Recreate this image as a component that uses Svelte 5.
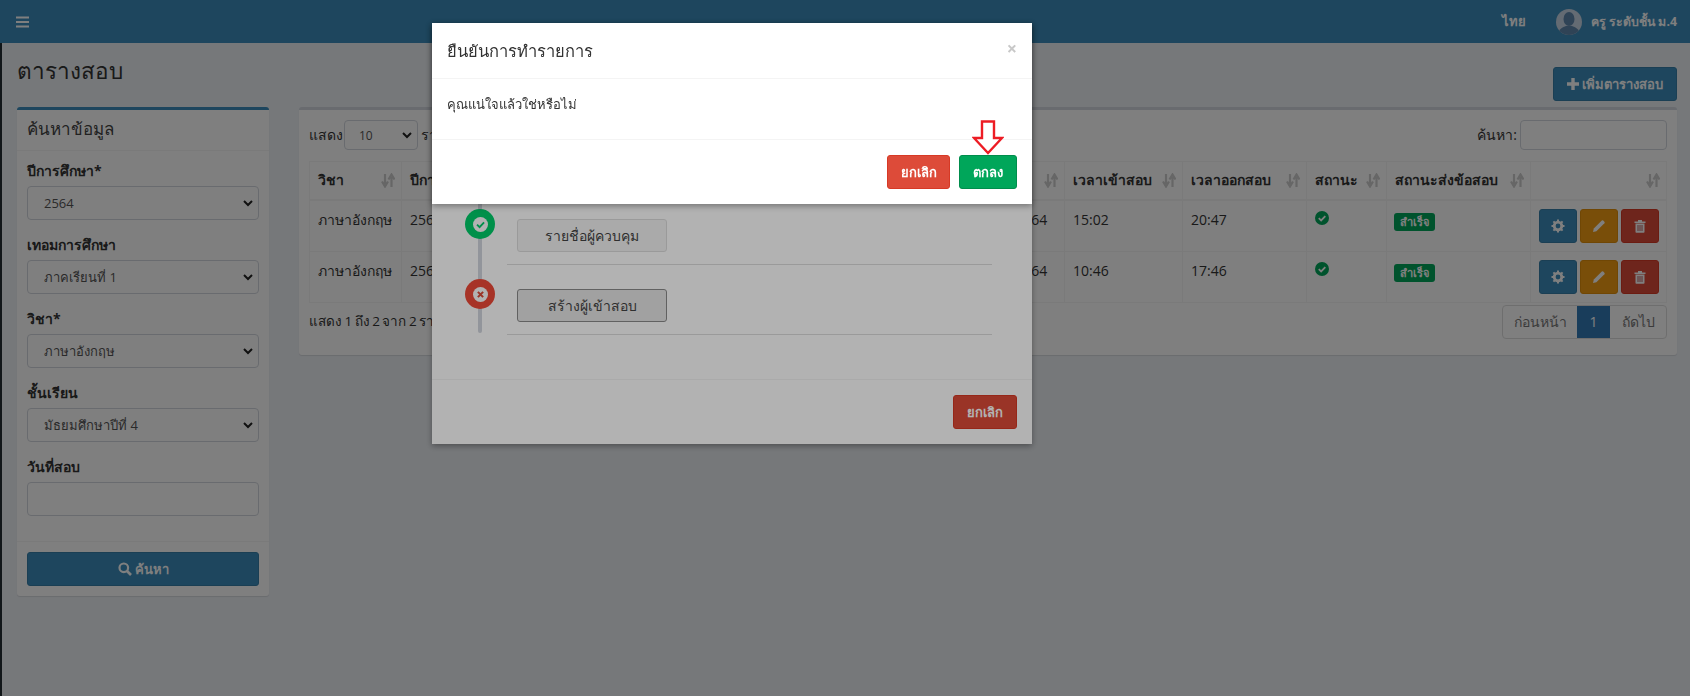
<script>
  const filters = [
    { label: 'ปีการศึกษา*', value: '2564' },
    { label: 'เทอมการศึกษา', value: 'ภาคเรียนที่ 1' },
    { label: 'วิชา*', value: 'ภาษาอังกฤษ' },
    { label: 'ชั้นเรียน', value: 'มัธยมศึกษาปีที่ 4' }
  ];

  const columns = [
    { title: 'วิชา', width: 92 },
    { title: 'ปีการศึกษา', width: 110 },
    { title: 'ภาคเรียน', width: 110 },
    { title: 'ชั้นเรียน', width: 170 },
    { title: 'ห้องสอบ', width: 173 },
    { title: 'วันที่สอบ', width: 100 },
    { title: 'เวลาเข้าสอบ', width: 118 },
    { title: 'เวลาออกสอบ', width: 124 },
    { title: 'สถานะ', width: 80 },
    { title: 'สถานะส่งข้อสอบ', width: 144 },
    { title: '', width: 136 }
  ];

  const rows = [
    { date: '27/09/2564', start: '15:02', end: '20:47' },
    { date: '28/09/2564', start: '10:46', end: '17:46' }
  ];

  const steps = [
    { name: 'ข้อมูลการสอบ', ok: true },
    { name: 'รายชื่อผู้ควบคุม', ok: true },
    { name: 'สร้างผู้เข้าสอบ', ok: false }
  ];
</script>

{#snippet sortIcon()}
  <svg class="sort" viewBox="0 0 14 15" width="14" height="15">
    <path d="M4 1v10M1 8.500 4 13.500 7 8.500" fill="none" stroke="currentColor" stroke-width="2.200" />
    <path d="M10.500 14V4M7.500 6.500 10.500 1.500 13.500 6.500" fill="none" stroke="currentColor" stroke-width="2.200" />
  </svg>
{/snippet}

{#snippet checkCircle(size)}
  <svg viewBox="0 0 16 16" width={size} height={size}>
    <circle cx="8" cy="8" r="8" fill="currentColor" />
    <path d="M4.300 8.200 7 10.800 11.800 5.800" fill="none" stroke="#fff" stroke-width="2" />
  </svg>
{/snippet}

<header class="navbar">
  <svg class="burger" viewBox="0 0 13 12" width="13" height="12">
    <path d="M0 1.500h13M0 6h13M0 10.500h13" stroke="#fff" stroke-width="1.800" />
  </svg>
  <div class="nav-right">
    <span class="lang">ไทย</span>
    <svg class="avatar" viewBox="0 0 26 26" width="26" height="26">
      <clipPath id="avatar-clip"><circle cx="13" cy="13" r="13" /></clipPath>
      <g clip-path="url(#avatar-clip)">
        <rect width="26" height="26" fill="#c9d6e6" />
        <ellipse cx="13" cy="10" rx="5.500" ry="7" fill="#5f87ad" />
        <path d="M2 26c0-6 5-8 8-9h6c3 1 8 3 8 9z" fill="#5f87ad" />
      </g>
    </svg>
    <span class="user">ครู ระดับชั้น ม.4</span>
  </div>
</header>

<main class="content">
  <div class="page-head">
    <h1>ตารางสอบ</h1>
    <button class="btn btn-primary add">
      <svg viewBox="0 0 12 12" width="12" height="12"><path d="M6 0v12M0 6h12" stroke="#fff" stroke-width="3.400" /></svg>
      เพิ่มตารางสอบ
    </button>
  </div>

  <div class="columns">
    <section class="box search-box">
      <h2>ค้นหาข้อมูล</h2>
      <div class="box-body">
        {#each filters as f}
          <div class="field">
            <label for={f.label}>{f.label}</label>
            <select id={f.label} class="control"><option>{f.value}</option></select>
          </div>
        {/each}
        <div class="field">
          <label for="exam-date">วันที่สอบ</label>
          <input id="exam-date" class="control" />
        </div>
      </div>
      <div class="box-footer">
        <button class="btn btn-primary block">
          <svg viewBox="0 0 14 14" width="14" height="14">
            <circle cx="5.800" cy="5.800" r="4.300" fill="none" stroke="#fff" stroke-width="2.200" />
            <path d="M9 9l4 4" stroke="#fff" stroke-width="2.600" />
          </svg>
          ค้นหา
        </button>
      </div>
    </section>

    <section class="box table-box">
      <div class="table-top">
        <div class="length">
          แสดง
          <select class="control small"><option>10</option></select>
          รายการ
        </div>
        <div class="filter">ค้นหา: <input class="control filter-input" /></div>
      </div>

      <table>
        <colgroup>
          {#each columns as c}<col style="width: {c.width}px" />{/each}
        </colgroup>
        <thead>
          <tr>
            {#each columns as c}
              <th><span class="th-inner">{c.title}{@render sortIcon()}</span></th>
            {/each}
          </tr>
        </thead>
        <tbody>
          {#each rows as r}
            <tr>
              <td>ภาษาอังกฤษ</td>
              <td>2564</td>
              <td>1</td>
              <td>มัธยมศึกษาปีที่ 4</td>
              <td>ห้อง 1</td>
              <td>{r.date}</td>
              <td>{r.start}</td>
              <td>{r.end}</td>
              <td class="state">{@render checkCircle(14)}</td>
              <td><span class="badge">สำเร็จ</span></td>
              <td class="action-cell">
                <div class="actions">
                  <button class="btn icon btn-primary" aria-label="ตั้งค่า">
                    <svg viewBox="0 0 14 14" width="14" height="14">
                      <circle cx="7" cy="7" r="3.800" fill="none" stroke="#fff" stroke-width="2.800" />
                      <path d="M7 .5v13M.5 7h13M2.400 2.400l9.200 9.200M11.600 2.400l-9.200 9.200" stroke="#fff" stroke-width="2" stroke-dasharray="2.300 8.400" />
                    </svg>
                  </button>
                  <button class="btn icon btn-warning" aria-label="แก้ไข">
                    <svg viewBox="0 0 14 14" width="14" height="14">
                      <path d="M1 13l.8-3.400L9.800 1.600a1 1 0 0 1 1.400 0l1.200 1.200a1 1 0 0 1 0 1.400L4.400 12.200z" fill="#fff" />
                    </svg>
                  </button>
                  <button class="btn icon btn-danger" aria-label="ลบ">
                    <svg viewBox="0 0 14 14" width="14" height="14">
                      <path d="M1.500 2.500h11v1.500h-11zM5 2.500V1h4v1.500M2.500 4.500h9V13a.8.8 0 0 1-.8.800H3.300a.8.8 0 0 1-.8-.8z" fill="#fff" />
                      <path d="M5 6v6M7 6v6M9 6v6" stroke="#a33" stroke-width=".8" />
                    </svg>
                  </button>
                </div>
              </td>
            </tr>
          {/each}
        </tbody>
      </table>

      <div class="table-bottom">
        <div class="info">แสดง 1 ถึง 2 จาก 2 รายการ</div>
        <div class="pager">
          <span>ก่อนหน้า</span>
          <span class="active">1</span>
          <span>ถัดไป</span>
        </div>
      </div>
    </section>
  </div>
</main>

<div class="backdrop"></div>

<div class="modal lower">
  <div class="modal-header"><span class="modal-title">ขั้นตอนการสร้างตารางสอบ</span></div>
  <div class="lower-body">
    <ul class="timeline">
      {#each steps as s}
        <li>
          <span class="dot" class:fail={!s.ok}>
            {#if s.ok}
              <svg viewBox="0 0 16 16" width="15" height="15">
                <circle cx="8" cy="8" r="8" fill="#fff" />
                <path d="M4.300 8.200 7 10.800 11.800 5.800" fill="none" stroke="#00ce6b" stroke-width="2" />
              </svg>
            {:else}
              <svg viewBox="0 0 16 16" width="15" height="15">
                <circle cx="8" cy="8" r="8" fill="#fff" />
                <path d="M5.200 5.200l5.600 5.600M10.800 5.200l-5.600 5.600" stroke="#dd4b39" stroke-width="2.200" />
              </svg>
            {/if}
          </span>
          <button class="step-btn" class:current={!s.ok}>{s.name}</button>
        </li>
      {/each}
    </ul>
  </div>
  <div class="modal-footer"><button class="btn btn-cancel">ยกเลิก</button></div>
  <div class="lower-dim"></div>
</div>

<div class="modal upper">
  <div class="modal-header">
    <span class="modal-title">ยืนยันการทำรายการ</span>
    <span class="close">×</span>
  </div>
  <div class="confirm-body">คุณแน่ใจแล้วใช่หรือไม่</div>
  <div class="modal-footer confirm-footer">
    <button class="btn btn-cancel">ยกเลิก</button>
    <button class="btn btn-ok">ตกลง</button>
    <svg class="pointer" viewBox="0 0 32 35" width="32" height="35">
      <path d="M10 1.500h12V18h8L16 33 2 18h8z" fill="#fff" stroke="#ed1c24" stroke-width="2.400" />
    </svg>
  </div>
</div>

<style>
  :global(body) {
    margin: 0;
    background: #222d32;
    font-family: "Open Sans", "Noto Sans", sans-serif;
    font-size: 14px;
    color: #333;
  }

  .navbar {
    height: 43px;
    background: #3c8dbc;
    display: flex;
    align-items: center;
    justify-content: space-between;
    padding: 0 13px 0 16px;
    color: #fff;
  }

  .nav-right {
    display: flex;
    align-items: center;
    font-weight: 700;
    font-size: 13px;
  }

  .lang { margin-right: 30px; }
  .avatar { margin-right: 9px; }
  .user { font-size: 12.300px; }

  .content {
    margin-left: 2px;
    height: 653px;
    background: #ecf0f5;
    padding: 0 13px 0 15px;
    box-sizing: border-box;
  }

  .page-head {
    height: 64px;
    display: flex;
    justify-content: space-between;
    align-items: flex-end;
  }

  h1 {
    margin: 0 0 18px;
    font-size: 22.500px;
    font-weight: 400;
    line-height: 36px;
  }

  .btn {
    border: 1px solid transparent;
    border-radius: 3px;
    font: inherit;
    font-weight: 700;
    font-size: 13px;
    height: 34px;
    padding: 0 12px;
    color: #fff;
    display: inline-flex;
    align-items: center;
    justify-content: center;
    gap: 3px;
    box-sizing: border-box;
  }

  .btn-primary { background: #3c8dbc; border-color: #367fa9; }
  .btn-warning { background: #f39c12; border-color: #e08e0b; }
  .btn-danger { background: #dd4b39; border-color: #d73925; }

  .add { width: 124px; margin-bottom: 6px; padding: 0; }

  .columns {
    display: grid;
    grid-template-columns: 252px 1378px;
    gap: 30px;
    align-items: start;
  }

  .box {
    background: #fff;
    border-top: 3px solid #d2d6de;
    border-radius: 3px;
    box-shadow: 0 1px 1px rgba(0, 0, 0, .1);
  }

  .search-box { border-top-color: #3c8dbc; }

  h2 {
    margin: 0;
    height: 40px;
    line-height: 38px;
    padding: 0 10px;
    font-size: 17px;
    font-weight: 400;
    color: #444;
    border-bottom: 1px solid #f4f4f4;
  }

  .box-body {
    padding: 10px 10px 25px;
    display: flex;
    flex-direction: column;
    gap: 15px;
  }

  .field label {
    display: block;
    height: 25px;
    line-height: 20px;
    font-weight: 700;
    font-size: 14px;
  }

  .control {
    display: block;
    width: 100%;
    height: 34px;
    box-sizing: border-box;
    border: 1px solid #d2d6de;
    border-radius: 4px;
    background: #fff;
    font: inherit;
    font-size: 13px;
    color: #555;
    padding: 0 16px;
  }

  select.control {
    appearance: none;
    background-image: url("data:image/svg+xml,%3Csvg xmlns='http://www.w3.org/2000/svg' width='10' height='7'%3E%3Cpath d='M1 1l4 4 4-4' fill='none' stroke='%23222' stroke-width='2'/%3E%3C/svg%3E");
    background-repeat: no-repeat;
    background-position: right 5px center;
  }

  .box-footer {
    border-top: 1px solid #f4f4f4;
    padding: 10px;
  }

  .block { width: 100%; }

  .table-box { padding: 10px; height: 248px; box-sizing: border-box; }

  .table-top {
    display: flex;
    justify-content: space-between;
    align-items: center;
    height: 30px;
    margin-bottom: 11px;
  }

  .length, .filter {
    display: flex;
    align-items: center;
    gap: 3px;
  }

  .small { width: 74px; height: 30px; font-size: 12px; padding: 0 14px; margin-left: -2px; }
  .filter-input { width: 147px; height: 30px; }

  table {
    border-collapse: collapse;
    table-layout: fixed;
    width: 1357px;
    border: 1px solid #f4f4f4;
  }

  th, td {
    border: 1px solid #f4f4f4;
    padding: 8px;
    text-align: left;
    vertical-align: top;
    box-sizing: border-box;
  }

  th {
    height: 38px;
    font-size: 14px;
    line-height: 22px;
    white-space: nowrap;
    border-bottom-width: 2px;
    overflow: hidden;
    padding-top: 7px;
    padding-bottom: 7px;
  }

  td {
    height: 51px;
    line-height: 20px;
    padding-top: 9px;
    white-space: nowrap;
    overflow: hidden;
  }

  .action-cell { padding-top: 8px; padding-bottom: 8px; }

  .th-inner {
    display: flex;
    justify-content: space-between;
    align-items: center;
    height: 22px;
  }

  .sort { color: #ccc; flex: none; margin-left: auto; margin-right: -2px; }
  .state { color: #00a65a; }
  .state svg { display: block; margin-top: 1px; }

  .badge {
    display: block;
    width: fit-content;
    background: #00a65a;
    color: #fff;
    font-size: 11px;
    font-weight: 700;
    padding: 2px 6px;
    border-radius: 3px;
    line-height: 14px;
    margin-top: 3px;
    margin-left: -1px;
  }

  .actions { display: flex; gap: 3px; justify-content: flex-end; margin-right: -1px; }
  .icon { width: 38px; padding: 0; }

  .table-bottom {
    display: flex;
    justify-content: space-between;
    align-items: flex-start;
    margin-top: 2px;
  }

  .info { padding-top: 6px; line-height: 20px; word-spacing: -1px; font-size: 13.500px; }

  .pager {
    display: flex;
    height: 34px;
    border: 1px solid #ddd;
    border-radius: 4px;
    box-sizing: border-box;
    color: #777;
    overflow: hidden;
  }

  .pager span {
    line-height: 32px;
    text-align: center;
    width: 74px;
  }

  .pager span:last-child { width: 56px; }

  .pager .active {
    background: #337ab7;
    color: #fff;
    width: 33px;
  }

  .backdrop {
    position: fixed;
    inset: 0;
    background: rgba(0, 0, 0, .5);
  }

  .modal {
    position: fixed;
    left: 432px;
    top: 23px;
    width: 600px;
    background: #fff;
    box-shadow: 0 2px 6px rgba(0, 0, 0, .35);
    display: flex;
    flex-direction: column;
  }

  .modal-header {
    height: 55px;
    border-bottom: 1px solid #f4f4f4;
    display: flex;
    align-items: center;
    justify-content: space-between;
    padding: 0 15px;
  }

  .modal-title { font-size: 16.500px; color: #333; }

  .close {
    font-size: 18px;
    font-weight: 700;
    color: #c8c8c8;
    margin-top: -6px;
  }

  .modal-footer {
    border-top: 1px solid #f4f4f4;
    height: 65px;
    padding: 15px;
    box-sizing: border-box;
    display: flex;
    justify-content: flex-end;
    gap: 9px;
    position: relative;
  }

  .lower-body { padding: 46px 40px 44px 75px; }
  .timeline { list-style: none; margin: 0; padding: 0; position: relative; }

  .timeline::before {
    content: "";
    position: absolute;
    left: -29px;
    top: 0;
    bottom: 2px;
    width: 4px;
    border-radius: 2px;
    background: #d2d6de;
  }

  .timeline li {
    position: relative;
    height: 70px;
    box-sizing: border-box;
    padding: 24px 0 0 10px;
    border-bottom: 1px solid #ddd;
  }

  .dot {
    position: absolute;
    left: -42px;
    top: 14px;
    width: 30px;
    height: 30px;
    border-radius: 50%;
    background: #00ce6b;
    display: flex;
    align-items: center;
    justify-content: center;
  }

  .dot.fail { background: #f04a38; }

  .step-btn {
    display: block;
    width: 150px;
    height: 33px;
    background: #f4f4f4;
    border: 1px solid #ddd;
    border-radius: 3px;
    font: inherit;
    font-size: 14px;
    color: #444;
  }

  .step-btn.current { background: #e7e7e7; border-color: #8c8c8c; }

  .btn-cancel { background: #dd4b39; border-color: #d73925; width: 63px; padding: 0; }
  .btn-ok { background: #00a65a; border-color: #008d4c; width: 58px; padding: 0; }

  .lower { height: 421px; }
  .lower .modal-footer { height: 64px; }
  .lower .btn-cancel { width: 64px; }
  .lower-dim {
    position: absolute;
    inset: 0;
    background: rgba(0, 0, 0, .3);
  }

  .confirm-body {
    height: 60px;
    padding: 15px;
    box-sizing: border-box;
    font-size: 13px;
  }

  .pointer {
    position: absolute;
    right: 28px;
    top: -20px;
  }
</style>
